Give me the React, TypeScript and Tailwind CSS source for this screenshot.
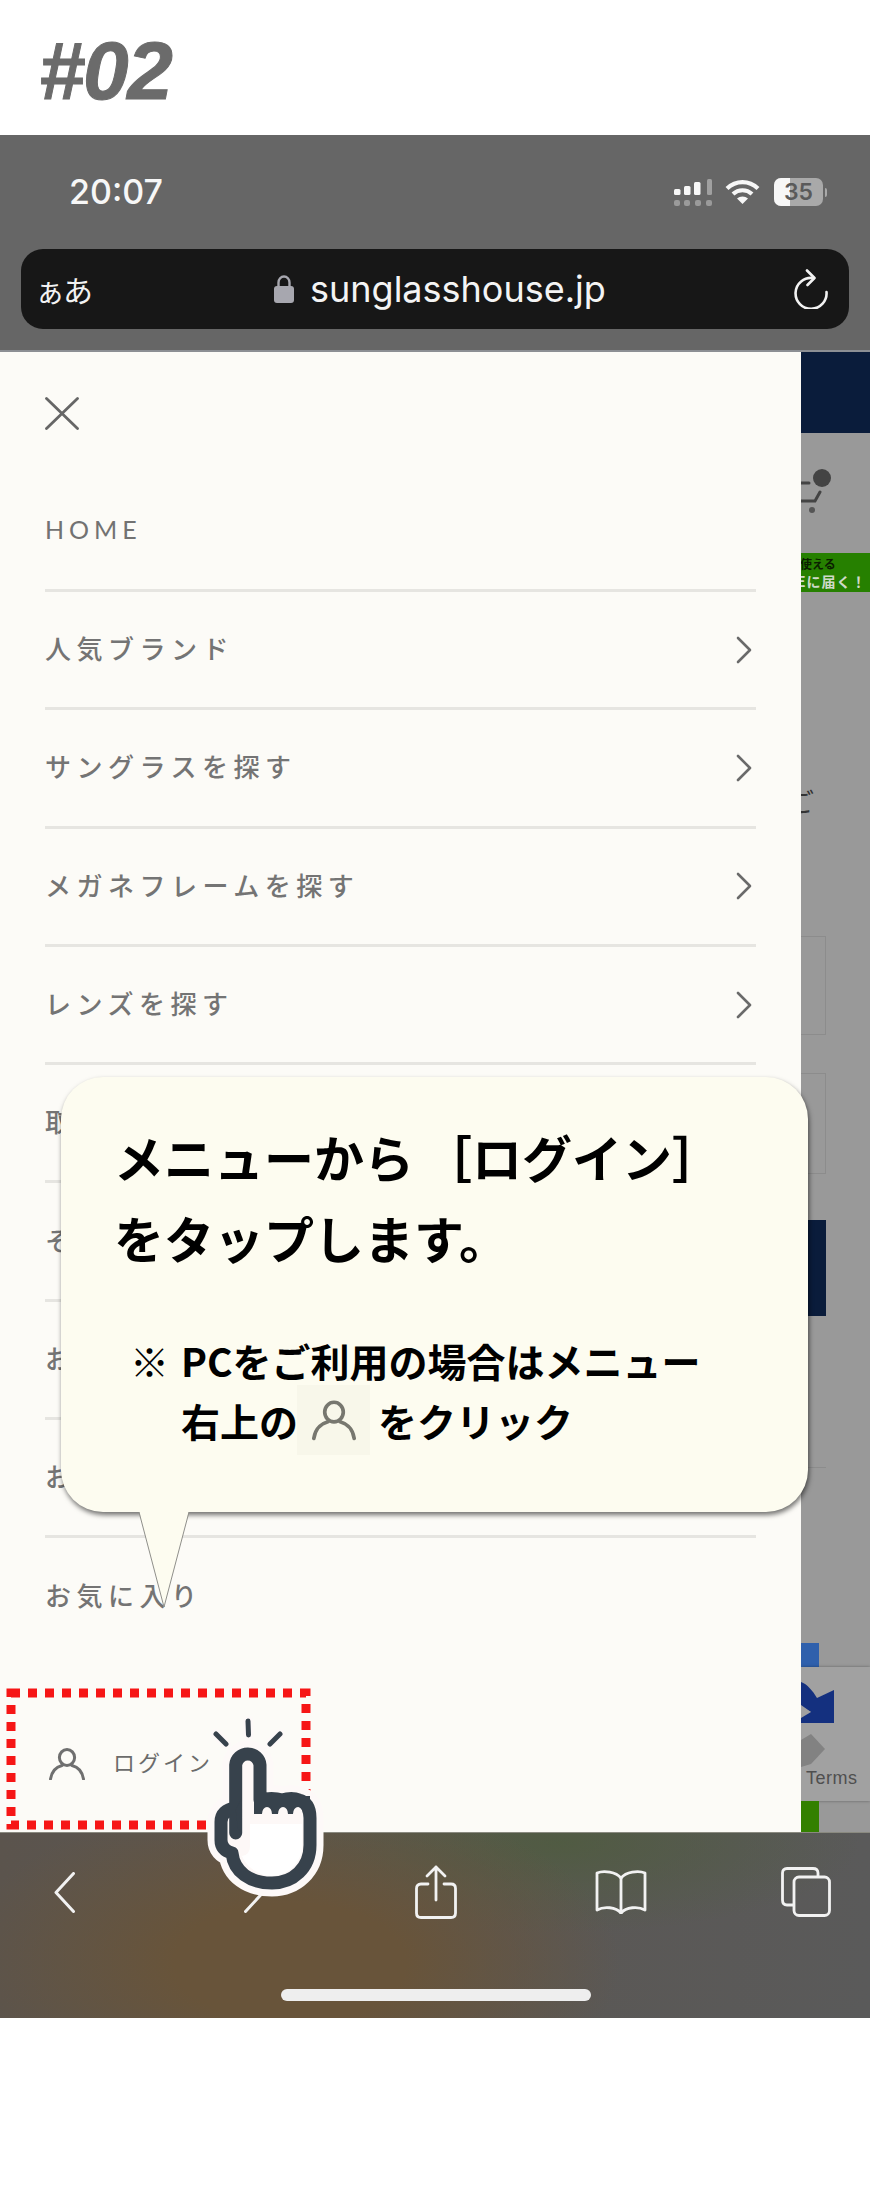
const jp = "font-['Noto_Sans_CJK_JP','Noto_Sans',sans-serif]";

function Chevron() {
  return (
    <svg width="18" height="28" viewBox="0 0 18 28" fill="none" stroke="#6a6a6a" strokeWidth="2.6" strokeLinecap="round" strokeLinejoin="round">
      <path d="M3 2 L15 14 L3 26" />
    </svg>
  );
}

function Person({ w, h, color }: { w: number; h: number; color: string }) {
  return (
    <svg width={w} height={h} viewBox="0 0 36 32" fill="none" stroke={color} strokeWidth="3" strokeLinecap="round">
      <ellipse cx="18" cy="9.5" rx="7.6" ry="8" />
      <path d="M1.5 31 C3 22 9 18.5 13 17.5 M34.5 31 C33 22 27 18.5 23 17.5" />
    </svg>
  );
}

const rows = ["人気ブランド", "サングラスを探す", "メガネフレームを探す", "レンズを探す", "取扱店舗", "その他", "お知らせ", "お問い合わせ"];

const handOutline =
  "M55.7 143 L55.7 75 A12.2 12.2 0 0 1 80 75 L80 110 Q92 107 102 110 Q112 107 119 110 Q130 113 130 128 L130 155 C130 178 113 193 92 193 C70 193 54 182 52 163 Q41 160 41 150 L41 132 Q41 120 55.7 118";

export default function App() {
  return (
    <div className={`relative w-[870px] h-[2191px] overflow-hidden bg-white ${jp}`}>
      {/* Heading */}
      <div className="h-[135px] pl-[39px] pt-[25px] font-['Liberation_Sans',sans-serif] font-bold italic text-[82px] leading-[92px] tracking-[-1.5px] text-[#6b6b6b] [-webkit-text-stroke:1px_#6b6b6b]">
        #02
      </div>

      {/* Phone top */}
      <div className="h-[217px] bg-[#666666] border-b-2 border-[#8c8f94]">
        <div className="h-[114px] flex items-center justify-between pl-[69px] pr-[43px] pt-[0px]">
          <span className="font-['Inter',sans-serif] font-medium text-[34px] leading-none text-[#f7f7f7]">20:07</span>
          <div className="flex items-center">
            <svg width="39" height="27" viewBox="0 0 39 27" fill="#f7f7f7">
              <rect x="0" y="10" width="6.5" height="6" rx="1.5" />
              <rect x="10" y="7" width="6.5" height="9" rx="1.5" />
              <rect x="20" y="3" width="6.5" height="13" rx="1.5" />
              <rect x="33" y="0" width="5" height="16" rx="1.5" fill="#a0a0a0" />
              <g fill="#9a9a9a">
                <rect x="0" y="21" width="6" height="6" rx="2" />
                <rect x="10" y="21" width="6" height="6" rx="2" />
                <rect x="21" y="21" width="6" height="6" rx="2" />
                <rect x="32" y="21" width="6" height="6" rx="2" />
              </g>
            </svg>
            <svg className="ml-[12px]" width="35" height="26" viewBox="0 0 35 26" fill="none" stroke="#f7f7f7" strokeWidth="4.2">
              <path d="M2 9.5 C11 1 24 1 33 9.5" />
              <path d="M8 15 C13.5 10 21.5 10 27 15" />
              <path d="M17.5 25 L12 19.5 C15 16.8 20 16.8 23 19.5 Z" fill="#f7f7f7" stroke="none" />
            </svg>
            <div className="ml-[14px] relative w-[49px] h-[28px] rounded-[7px] overflow-hidden bg-[#a9a9a9] flex items-center justify-center">
              <div className="absolute left-0 top-0 bottom-0 w-[16px] bg-[#f7f7f7]" />
              <span className="relative font-['Inter',sans-serif] font-semibold text-[23px] leading-none text-[#5a5a5a]">35</span>
            </div>
            <div className="w-[2px] h-[9px] ml-[2px] rounded-r bg-[#a9a9a9]" />
          </div>
        </div>
        <div className="mx-[21px] h-[80px] rounded-[22px] bg-[#171717] flex items-center">
          <span className="ml-[14px] w-[57px] leading-none text-[#f2f2f2] whitespace-nowrap text-[30px] tracking-[-2px] flex items-baseline">ぁあ</span>
          <svg className="ml-[182px]" width="20" height="28" viewBox="0 0 20 28" fill="none">
            <path d="M4.5 13 V7.5 A5.5 6 0 0 1 15.5 7.5 V13" stroke="#a7a7af" strokeWidth="2.4" />
            <rect x="0" y="11" width="20" height="17" rx="3" fill="#a7a7af" />
          </svg>
          <span className="ml-[16px] w-[292px] font-['Inter',sans-serif] text-[36px] leading-none text-[#f4f4f4] whitespace-nowrap">sunglasshouse.jp</span>
          <svg className="ml-[192px]" width="34" height="40" viewBox="0 0 34 40" fill="none" stroke="#f2f2f2" strokeWidth="2.6" strokeLinecap="round" strokeLinejoin="round">
            <path d="M19 9 A15.5 15.5 0 1 0 32.5 23" />
            <path d="M13 1.5 L20.5 9 L13.5 16" />
          </svg>
        </div>
      </div>

      {/* Middle */}
      <div className="flex h-[1480px]">
        {/* Menu panel */}
        <div className="w-[801px] bg-[#fcfbf7] flex flex-col">
          <div className="h-[119px] pl-[45px] pt-[45px]">
            <svg width="34" height="33" viewBox="0 0 34 33" stroke="#666" strokeWidth="2.8" strokeLinecap="round">
              <path d="M1.5 1.5 L32.5 31.5 M32.5 1.5 L1.5 31.5" />
            </svg>
          </div>
          <div className="mx-[45px] w-[711px]">
            <div className="h-[121px] border-b-[3px] border-[#e6e5e1] flex items-center font-['Lato',sans-serif] text-[25px] tracking-[5px] text-[#727272]">
              HOME
            </div>
            {rows.map((r) => (
              <div key={r} className="h-[118.3px] border-b-[3px] border-[#e6e5e1] flex items-center justify-between pr-[3px] text-[26px] font-medium tracking-[5.5px] text-[#747474]">
                <span className="-mt-[4px]">{r}</span>
                <Chevron />
              </div>
            ))}
            <div className="h-[112px] flex items-center text-[26px] font-medium tracking-[5.5px] text-[#747474]">お気に入り</div>
          </div>
          <div className="mt-[92px] pl-[49px] flex items-center">
            <div className="mt-[6px]">
              <Person w={36} h={32} color="#6f6f6f" />
            </div>
            <span className="ml-[28px] text-[22px] leading-none tracking-[3px] text-[#6b6b6b]">ログイン</span>
          </div>
        </div>

        {/* Dimmed page behind */}
        <div className="w-[69px] bg-[#999999] flex flex-col overflow-hidden">
          <div className="h-[81px] bg-[#0a1c3b] shrink-0" />
          <div className="h-[120px] shrink-0">
            <svg width="69" height="120" viewBox="0 0 69 120" fill="none" stroke="#444" strokeWidth="3" strokeLinecap="round">
              <circle cx="21" cy="45" r="9" fill="#444" stroke="none" />
              <path d="M0 50 H8 M0 68 H14 L19 59" />
              <circle cx="11" cy="77" r="3" fill="#555" stroke="none" />
            </svg>
          </div>
          <div className="h-[39px] shrink-0 bg-[#268000] font-bold leading-none whitespace-nowrap flex flex-col justify-center gap-[4px]">
            <span className="ml-[-1px] text-[12px] text-[#0b2000]">使える</span>
            <span className="ml-[-4px] text-[14px] tracking-[1px] text-[#cfdac8]">Eに届く！</span>
          </div>
          <span className="mt-[194px] ml-[-13px] text-[26px] leading-[30px] text-[#333] shrink-0">ご</span>
          <div className="mt-[120px] w-[25px] h-[99px] border border-l-0 border-[#8c8c8c] shrink-0" />
          <div className="mt-[38px] w-[25px] h-[101px] border border-l-0 border-[#8c8c8c] shrink-0" />
          <div className="mt-[46px] w-[25px] h-[96px] bg-[#0a1c3b] shrink-0" />
          <div className="mt-[151px] w-[25px] h-[1px] bg-[#8c8c8c] shrink-0" />
          <div className="mt-[175px] w-[18px] h-[24px] bg-[#2f60ac] shrink-0" />
          <div className="h-[134px] bg-[#a1a1a1] shadow-[0_0_3px_rgba(0,0,0,0.35)] shrink-0 flex flex-col">
            <svg width="69" height="100" viewBox="0 0 69 100">
              <path d="M0 15 C6 17 12 24 16 31 L33 23 V56 H0 V45 H10 L0 38 Z" fill="#14307f" />
              <path d="M0 40 L10 45 L0 51 Z" fill="#a1a1a1" />
              <path d="M0 73 L10 67 L24 82 L10 97 L0 100 Z" fill="#828282" />
            </svg>
            <span className="pl-[5px] font-['Liberation_Sans',sans-serif] text-[18px] leading-[22px] tracking-[0.5px] text-[#4f4f4f]">Terms</span>
          </div>
          <div className="w-[18px] h-[31px] bg-[#338000] shrink-0" />
        </div>
      </div>

      {/* Bottom toolbar */}
      <div className="h-[186px] border-t border-[#8a8a80] bg-[#5a5a5a] bg-[radial-gradient(ellipse_330px_170px_at_290px_130px,#68543a_0%,#68543a_35%,#68543a00_100%),radial-gradient(ellipse_300px_90px_at_560px_10px,#4e5c3ecc_0%,#4e5c3e00_100%),linear-gradient(90deg,#5b544d_0%,#5a5a5a_100%)]">
        <div className="flex items-center pt-[32px]">
          <svg className="ml-[54px]" width="21" height="41" viewBox="0 0 21 41" fill="none" stroke="#f2f2f2" strokeWidth="3" strokeLinecap="round" strokeLinejoin="round">
            <path d="M19.5 1.5 L2 20.5 L19.5 39.5" />
          </svg>
          <svg className="ml-[169px]" width="21" height="41" viewBox="0 0 21 41" fill="none" stroke="#f2f2f2" strokeWidth="3" strokeLinecap="round" strokeLinejoin="round">
            <path d="M1.5 1.5 L19 20.5 L1.5 39.5" />
          </svg>
          <svg className="ml-[150px]" width="42" height="54" viewBox="0 0 42 54" fill="none" stroke="#f2f2f2" strokeWidth="2.8" strokeLinecap="round" strokeLinejoin="round">
            <path d="M13 19 H6 Q1.5 19 1.5 23.5 V48 Q1.5 52.5 6 52.5 H36 Q40.5 52.5 40.5 48 V23.5 Q40.5 19 36 19 H29" />
            <path d="M21 35 V2 M12 11 L21 2 L30 11" />
          </svg>
          <svg className="ml-[138px]" width="52" height="44" viewBox="0 0 52 44" fill="none" stroke="#f2f2f2" strokeWidth="2.8" strokeLinecap="round" strokeLinejoin="round">
            <path d="M26 8 C21 2 9 0 2 3 V40 C9 36 21 37 26 43 C31 37 43 36 50 40 V3 C43 0 31 2 26 8 Z" />
            <path d="M26 8 V43" />
          </svg>
          <svg className="ml-[134px]" width="50" height="50" viewBox="0 0 50 50" fill="none" stroke="#f2f2f2" strokeWidth="2.8" strokeLinejoin="round">
            <path d="M37 9 V6 Q37 1.5 32 1.5 H6 Q1.5 1.5 1.5 6 V33 Q1.5 38 6 38 H13" />
            <rect x="13" y="10" width="35.5" height="38.5" rx="5" />
          </svg>
        </div>
        <div className="ml-[281px] mt-[70px] w-[310px] h-[12px] rounded-full bg-[#eeeeee]" />
      </div>

      {/* Dotted highlight */}
      <svg className="absolute left-[6px] top-[1688px]" width="306" height="142" viewBox="0 0 306 142" fill="none">
        <rect x="5" y="5" width="295" height="132" stroke="#f61616" strokeWidth="9" strokeDasharray="9 8" />
      </svg>

      {/* Tap hand */}
      <svg className="absolute left-[180px] top-[1690px]" width="160" height="220" viewBox="0 0 160 220" fill="none" strokeLinecap="round" strokeLinejoin="round">
        <path d="M68 31 L68.5 45 M36 44 L46 54 M100 44 L90 54" stroke="#fdf9f8" strokeWidth="10" />
        <path d={handOutline} fill="#fdf9f8" stroke="#fdf9f8" strokeWidth="27" />
        <path d={handOutline} fill="#fdf8f7" stroke="#37424c" strokeWidth="13" />
        <path d="M70 134 H122 V156 C122 172 108 186 92 186 C78 186 66 176 62 166 Q70 165 70 156 Z" fill="#ffffff" />
        <path d="M62 107 L62 142 L58 139 L55.7 120 Z" fill="#37424c" />
        <path d="M74 106 H130 V124 H123 A5 7 0 0 0 113 124 H108 A5 7 0 0 0 98 124 H92 A5 7 0 0 0 82 124 H74 Z" fill="#37424c" />
        <path d="M68 31 L68.5 45 M36 44 L46 54 M100 44 L90 54" stroke="#37424c" strokeWidth="5" />
      </svg>

      {/* Speech bubble */}
      <div className="absolute left-[61px] top-[1077px] w-[747px] h-[435px] rounded-[42px] bg-[#fdfcf0] shadow-[1px_3px_5px_rgba(0,0,0,0.55)] pl-[53px] pt-[43px] font-bold text-black">
        <p className="-mt-[3px] mb-[3px] text-[50px] leading-[78px] whitespace-nowrap">
          メニューから<span className="ml-[8px]">［ログイン］</span>
        </p>
        <p className="text-[50px] leading-[78px] whitespace-nowrap">をタップします。</p>
        <div className="mt-[54px] flex text-[39px] leading-[60px] whitespace-nowrap">
          <span className="ml-[16px] w-[51px] shrink-0">※</span>
          <div>
            <p>PCをご利用の場合はメニュー</p>
            <p className="flex items-center">
              右上の
              <span className="ml-[-1px] mr-[8px] -my-[5px] w-[73px] h-[70px] bg-[#f8f7ea] flex items-center justify-center">
                <Person w={44} h={42} color="#77776f" />
              </span>
              をクリック
            </p>
          </div>
        </div>
      </div>
      {/* Bubble tail */}
      <svg className="absolute left-[130px] top-[1510px]" width="70" height="102" viewBox="0 0 70 102" fill="none">
        <path d="M9 1 L34 97 L59 1 Z" fill="#fdfcf0" />
        <path d="M9 2 L34 97 L59 2" stroke="#8f8f8a" strokeWidth="1" />
      </svg>
    </div>
  );
}
